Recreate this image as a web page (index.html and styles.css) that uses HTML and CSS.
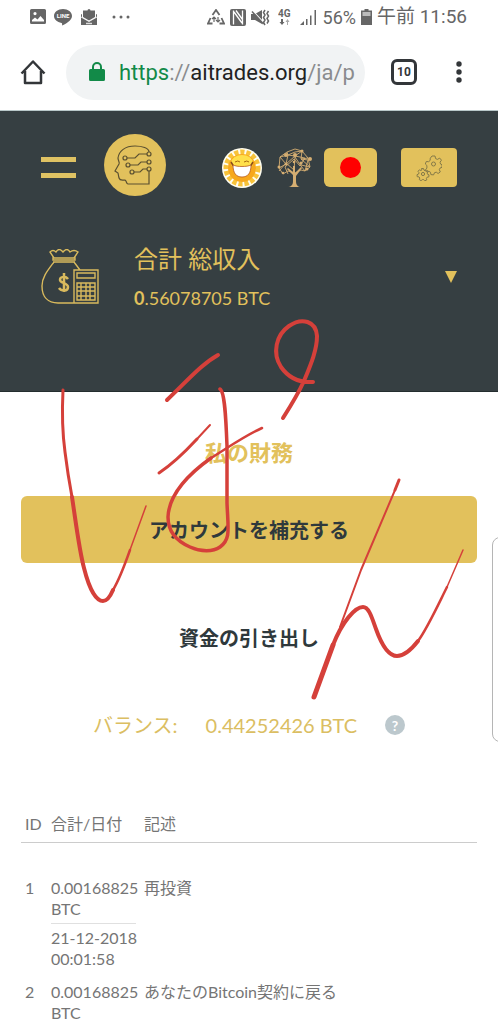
FILE: index.html
```html
<!DOCTYPE html>
<html lang="ja">
<head>
    <meta charset="UTF-8">
    <meta name="viewport" content="width=device-width, initial-scale=1.0">
    <title>私の財務</title>
    <link rel="stylesheet" href="styles.css">
</head>
<body>
    <!-- Phone status bar -->
    <div class="status-bar">
        <div class="status-left">
            <svg width="16" height="16" viewBox="0 0 16 16"><path fill="#666" fill-rule="evenodd" d="M1.500 0h13A1.500 1.500 0 0 1 16 1.500v12a1.500 1.500 0 0 1-1.500 1.500h-13A1.500 1.500 0 0 1 0 13.500v-12A1.500 1.500 0 0 1 1.500 0zM2 12.500h12V11l-3.500-4-3 3.500L5 8.500 2 11zM5 3a1.600 1.600 0 1 0 0 3.200A1.600 1.600 0 0 0 5 3z"/></svg>
            <svg width="18" height="18" viewBox="0 0 18 18"><path fill="#666" d="M9 1C4 1 0 4 0 8c0 3.500 3.200 6.300 7.500 6.900.8.200.7 1.100.5 2.600 3-1.200 10-5 10-9.500C18 4 14 1 9 1z"/><text x="9" y="10" class="line-text">LINE</text></svg>
            <svg width="18" height="18" viewBox="0 0 18 18"><path fill="#666" d="M3 2.500h4.500a1.500 1.500 0 0 1 3 0H15V9l-6 3.500L3 9zM1 6l1 .5v3L9 13.500l7-4v-3l1-.5v11H1z"/><path stroke="#fff" stroke-width=".8" fill="none" d="M1 9l8 4.500L17 9"/><path stroke="#ddd" stroke-width="1.500" d="M6 15.500h6"/></svg>
            <svg class="dots" width="18" height="4" viewBox="0 0 18 4"><g fill="#666"><circle cx="2" cy="2" r="1.500"/><circle cx="9" cy="2" r="1.500"/><circle cx="16" cy="2" r="1.500"/></g></svg>
        </div>
        <div class="status-right">
            <svg width="18" height="17" viewBox="0 0 18 17"><path fill="none" stroke="#666" stroke-width="1.800" d="M5.500 6L9 1l3.500 5M14.500 9l2.500 5.500h-4.500M5.500 14.500H1L3.500 9"/><path fill="none" stroke="#666" stroke-width="1.200" d="M7 8v5M5 10l2-2 2 2M11 8v5M9 11l2 2 2-2"/></svg>
            <svg width="16" height="17" viewBox="0 0 16 17"><rect width="16" height="17" rx="2" fill="#666"/><path fill="none" stroke="#fff" stroke-width="1.300" d="M3.500 1.500v14M4 3l8 11M12.500 1.500v14M6 1.500l6.500 9"/></svg>
            <svg width="19" height="17" viewBox="0 0 19 17"><path fill="#666" d="M0 5h4l7-4v14l-7-4H0z"/><path stroke="#fff" stroke-width="1.300" d="M1 1l13 14"/><path stroke="#666" stroke-width="1.500" d="M1 2.500l11.500 12.500"/><path fill="none" stroke="#666" stroke-width="1.500" d="M14 1l-1.500 2.500L14 6l-1.500 2.500L14 11l-1.500 2.500L14 16M17.500 2L16 4.500 17.500 7 16 9.500l1.500 2.500-1.500 2.500"/></svg>
            <svg class="network" width="14" height="17" viewBox="0 0 14 17"><text x="0" y="8" class="network-text">4G</text><path fill="#666" d="M3 10h2v3h1.500L4 16l-2.500-3H3z"/><path fill="#aaa" d="M9 16h1v-3h1.500L9.500 10 7.500 13H9z"/></svg>
            <svg width="18" height="17" viewBox="0 0 18 17"><path fill="#666" d="M0 16l4-4v4zM6 10h1.500v6H6zM10 6.500h1.500V16H10zM14.500 1H16v15h-1.500z"/></svg>
            <span class="percent">56%</span>
            <svg width="11" height="16" viewBox="0 0 11 16"><path fill="#666" d="M3.500 0h4v1.500H11V16H0V1.500h3.500z"/><path fill="#bbb" d="M1.500 3h8v4h-8z"/></svg>
            <span class="clock">午前 11:56</span>
        </div>
    </div>

    <!-- Browser toolbar -->
    <div class="toolbar">
        <button type="button" class="icon-button" aria-label="ホーム">
            <svg width="26" height="26" viewBox="0 0 26 26"><path fill="none" stroke="#333639" stroke-width="2.500" stroke-linejoin="round" d="M1.500 14.500L13 2.500l11.500 12M5 12v12h16V12"/></svg>
        </button>
        <button type="button" class="address">
            <svg width="16" height="20" viewBox="0 0 16 20"><path fill="#128a48" d="M1.500 7h13A1.500 1.500 0 0 1 16 8.500v9a1.500 1.500 0 0 1-1.500 1.500h-13A1.500 1.500 0 0 1 0 17.500v-9A1.500 1.500 0 0 1 1.500 7z"/><path fill="none" stroke="#128a48" stroke-width="2" d="M4 8V5a4 4 0 0 1 8 0v3"/></svg>
            <span class="url"><span class="secure">https</span><span class="dim">://</span>aitrades.org<span class="dim">/ja/p</span></span>
        </button>
        <button type="button" class="tabs">10</button>
        <button type="button" class="icon-button" aria-label="メニュー">
            <svg width="6" height="24" viewBox="0 0 6 24"><g fill="#333639"><circle cx="3" cy="4" r="2.700"/><circle cx="3" cy="12" r="2.700"/><circle cx="3" cy="20" r="2.700"/></g></svg>
        </button>
    </div>

    <header class="header">
        <nav class="nav">
            <button type="button" class="burger" aria-label="メニュー"><span></span><span></span></button>
            <a href="#" class="logo" aria-label="AI Trades">
                <svg width="62" height="62" viewBox="0 0 62 62"><circle cx="31" cy="31" r="31" fill="#e2c15c"/><g fill="none" stroke="#5b5030" stroke-width="1.200"><path d="M45 18c0-4-7-6-14-6-10 0-16 5-17 12 0 3 2 4 1 6l-4 7 3 2 1 5c1 3 3 2 6 2 2 1 1 4 3 4h21V37"/><circle cx="21" cy="24" r="2"/><path d="M23 24h8l4-4h8"/><circle cx="45" cy="20" r="2"/><circle cx="24" cy="31" r="2"/><path d="M26 31h8l3-3h6"/><circle cx="45" cy="28" r="2"/><circle cx="28" cy="38" r="2"/><path d="M30 38h6l3-3h4"/><circle cx="45" cy="35" r="2"/></g></svg>
            </a>
            <a href="#" class="sun" aria-label="スマイル">
                <svg width="40" height="40" viewBox="0 0 40 40"><circle cx="20" cy="20" r="20" fill="#fffdf0"/><circle cx="20" cy="20" r="16" fill="none" stroke="#f8c33a" stroke-width="5" stroke-dasharray="4.200 1.900"/><circle cx="20" cy="20" r="14" fill="#f7a81c"/><ellipse cx="20" cy="15" rx="11" ry="8" fill="#ffe04a"/><path d="M13 14q3-2 5 0M22 14q3-2 5 0" fill="none" stroke="#a86a10"/><path d="M9 14l3 5M31 14l-3 5" stroke="#8a4a18" stroke-width="1.500"/><path d="M11 17c4 2 14 2 18 0 0 8-3 12-9 12s-9-4-9-12z" fill="#fff" stroke="#b65a20" stroke-width=".8"/></svg>
            </a>
            <a href="#" class="tree" aria-label="ツリー">
                <svg width="36" height="40" viewBox="0 0 36 40"><path fill="#d5ae72" d="M11 39c4 0 6-2 6-6v-6l-6-6 1-1 5 4v-6h2v7l6-6 1 1-6 8v5c0 4 2 6 5 6z"/><g fill="none" stroke="#d5ae72" stroke-width=".9"><path d="M3 20l1-11 7-5 8-3 7 2 6 7 2 9-5 4-4-1-6 3-7-2-5 3zM3 20l7-4 2-9-8 2 6 7 9-8 7-5-7 1-7 3 7 1 10 2-5 8-6-7-9 8 3 7M32 10l-7 1 7 1-3 11-4-5-6-9-1 13-8-7-7 8M11 4l1 3M26 3l-1 8 9 8-9-2"/></g><g fill="#d5ae72"><circle cx="10" cy="7" r="2"/><circle cx="19" cy="7" r="2"/><circle cx="34" cy="11" r="2"/><circle cx="3" cy="19" r="1.500"/><circle cx="10" cy="16" r="1.500"/><circle cx="25" cy="15" r="1.500"/><circle cx="18" cy="14" r="1.300"/><circle cx="26" cy="3" r="1.500"/><circle cx="31" cy="21" r="1.500"/><circle cx="7" cy="25" r="1.300"/></g></svg>
            </a>
            <button type="button" class="flag" aria-label="日本語"><span class="flag-dot"></span></button>
            <button type="button" class="settings" aria-label="設定">
                <svg width="26" height="26" viewBox="0 0 26 26"><g fill="none" stroke="#857a48" stroke-width="1" stroke-linejoin="round"><path d="M16 1h3l.6 2.600 1.800.8 2.300-1.300 1.800 2.100-1.500 2 .6 1.900 1.400.6v2.600l-2 .8-.7 1.600 1 2.200-2.200 1.600-1.800-1.300-1.800.5-.9 2.200-2.700-.3-.4-2.300-1.600-1-2.200.7-1.400-2.300 1.600-1.500V10.500L9.300 9l1-2.500 2.300.2 1.500-1.200.2-2.300z"/><circle cx="17.500" cy="9" r="2"/><path d="M5.500 13.500h2l.5 1.700 1.300.6 1.500-.8 1.400 1.600-1 1.500.4 1.200 1.400.6-.2 2-1.700.3-.7 1.200.4 1.500-1.900.9-1.100-1.200H6.300l-1.200 1.100-1.800-1.100.5-1.600-.8-1.100-1.800-.2-.2-2 1.600-.7.4-1.300-1-1.400 1.400-1.500 1.500.7 1-.6z"/><circle cx="7" cy="19" r="1.600"/></g></svg>
            </button>
        </nav>
        <div class="income">
            <svg class="bag" width="58" height="56" viewBox="0 0 58 56"><g fill="none" stroke="#d9ba5d" stroke-width="1.400"><path d="M13 9L9 3q3-3 6 0 3-5 7 0 4-5 7 0 4-3 8 0l-4 6M12 9h22v2H12zM12 13h22M13 13C7 21 1 28 1 37c0 11 6 17 16 17h40V21H33v33M33 13l6 8M36 24h18v5H36zM36 34h18v17H36zM36 38h18M36 42h18M36 47h18M40 34v17M45 34v17M49 34v17"/><path stroke-width="2.500" d="M27 30c-2-3-8-3-8 1 0 3 8 3 8 7 0 5-7 4-9 1M23 24v19"/></g></svg>
            <div class="income-text">
                <div class="income-title">合計 総収入</div>
                <div class="income-value"><b>0</b>.56078705 BTC</div>
            </div>
            <button type="button" class="toggle" aria-label="開く"><svg width="12" height="12" viewBox="0 0 12 12"><path fill="#e2c15c" d="M0 0h12L6 12z"/></svg></button>
        </div>
    </header>

    <main class="finance">
        <h2>私の財務</h2>
        <button type="button" class="btn btn-gold">アカウントを補充する</button>
        <button type="button" class="btn">資金の引き出し</button>
        <div class="balance">
            <span>バランス:</span>
            <span class="balance-value">0.44252426 BTC</span>
            <button type="button" class="help">?</button>
        </div>
        <table class="history">
            <thead>
                <tr><th class="col-id">ID</th><th class="col-sum">合計/日付</th><th>記述</th></tr>
            </thead>
            <tbody>
                <tr>
                    <td>1</td>
                    <td><div class="amount">0.00168825 BTC</div><div class="date">21-12-2018<br>00:01:58</div></td>
                    <td>再投資</td>
                </tr>
                <tr>
                    <td>2</td>
                    <td>0.00168825 BTC</td>
                    <td>あなたのBitcoin契約に戻る</td>
                </tr>
            </tbody>
        </table>
    </main>

    <!-- Edge panel handle -->
    <div class="edge-panel"></div>

    <!-- Handwriting over the page -->
    <svg class="drawing" viewBox="0 0 498 1024">
        <g fill="none" stroke="#d5403a" stroke-linecap="round" stroke-linejoin="round">
            <path stroke-width="3" d="M63 390C62 410 62 430 65 452C67 468 69 481 72 497"/>
            <path stroke-width="4" d="M72 497C76 523 79 549 84 568C90 592 97 601 103 601C107 601 110 597 113 590"/>
            <path stroke-width="2.500" d="M113 590C119 580 124 567 130 550"/>
            <path stroke-width="1.500" d="M130 550L146 506"/>
            <path stroke-width="4" d="M218 355C202 364 190 378 167 400"/>
            <path stroke-width="3" d="M197 439C184 453 174 463 159 473"/>
            <path stroke-width="2" d="M210 425L197 439"/>
            <path stroke-width="3.500" d="M220 389C225 392 226 420 227 446V503C228 529 231 539 220 547C213 552 201 552 190 547C174 540 168 529 168 517C169 493 190 473 211 458"/>
            <path stroke-width="2.500" d="M211 458C226 449 244 436 262 428"/>
            <path stroke-width="4" d="M313 382C299 383 288 377 281 367C272 353 276 335 289 326C302 317 316 321 317 336C317 350 311 364 304 381C298 394 290 407 283 418"/>
            <path stroke-width="3" d="M399 480L395 490"/>
            <path stroke-width="2" d="M395 490C384 516 373 542 361 570L340 627"/>
            <path stroke-width="5" d="M333 645L314 697"/>
            <path stroke-width="4" d="M333 645C342 622 355 607 363 607C369 607 372 618 376 629C382 646 389 656 397 656C404 656 411 650 418 641"/>
            <path stroke-width="2.500" d="M418 641C427 629 438 605 447 587"/>
            <path stroke-width="1.500" d="M447 587L463 550"/>
        </g>
    </svg>
</body>
</html>
```
FILE: styles.css
```css
* {
    box-sizing: border-box;
}

body {
    position: relative;
    margin: 0;
    overflow-x: hidden;
    background-color: #fff;
    color: #757575;
    font-family: Lato, "Noto Sans CJK JP", sans-serif;
    font-size: 16px;
}

svg {
    display: block;
    flex: none;
}

button {
    padding: 0;
    border: none;
    background: none;
    color: inherit;
    font-family: inherit;
    cursor: pointer;
}

/* Status bar */
.status-bar {
    display: flex;
    align-items: center;
    justify-content: space-between;
    height: 34px;
    padding: 0 31px 0 30px;
    color: #666;
    font-family: Roboto, "Noto Sans CJK JP", sans-serif;
}

.status-left,
.status-right {
    display: flex;
    align-items: center;
    gap: 8px;
}

.status-right {
    gap: 5px;
}

.dots {
    margin-left: 6px;
}

.network {
    margin: 0 3px;
}

.line-text {
    fill: #fff;
    font-size: 6px;
    font-weight: bold;
    text-anchor: middle;
}

.network-text {
    fill: #666;
    font-size: 10px;
    font-weight: bold;
}

.percent {
    font-size: 18px;
}

.clock {
    font-size: 19px;
    line-height: 24px;
    white-space: nowrap;
}

/* Browser toolbar */
.toolbar {
    display: flex;
    align-items: center;
    height: 77px;
    padding: 0 36px 0 20px;
    border-bottom: 1px solid #b9c8c9;
    font-family: Roboto, sans-serif;
}

.address {
    display: flex;
    align-items: center;
    flex: 1;
    min-width: 0;
    gap: 14px;
    height: 55px;
    margin: 0 26px 0 20px;
    padding: 0 10px 0 23px;
    border-radius: 28px;
    background-color: #f1f3f4;
    color: #222;
    font-size: 22px;
}

.url {
    flex: 1;
    overflow: hidden;
    text-align: left;
    white-space: nowrap;
}

.secure {
    color: #128a48;
}

.dim {
    color: #8a8c8e;
}

.tabs {
    width: 26px;
    height: 26px;
    margin-right: 39px;
    border: 3px solid #333639;
    border-radius: 6px;
    color: #333639;
    font-size: 12px;
    font-weight: bold;
}

/* Dark header */
.header {
    height: 281px;
    padding: 23px 41px 0;
    border-bottom: 1px solid #242d2f;
    background-color: #363f42;
    color: #e2c15c;
}

.nav {
    display: flex;
    align-items: center;
}

.burger {
    display: grid;
    gap: 11px;
    width: 35px;
}

.burger span {
    height: 5px;
    background-color: #dfc263;
}

.logo {
    margin: 0 auto 5px 28px;
}

.tree {
    margin: 0 12px 0 14px;
}

.flag,
.settings {
    display: flex;
    align-items: center;
    justify-content: center;
    width: 53px;
    height: 39px;
    border-radius: 6px;
    background-color: #e2c15c;
}

.settings {
    width: 56px;
    margin-left: 24px;
    border-radius: 4px;
}

.flag-dot {
    width: 21px;
    height: 21px;
    border-radius: 50%;
    background-color: #f00;
}

.income {
    display: flex;
    align-items: center;
    margin-top: 41px;
}

.income-text {
    flex: 1;
    margin-left: 35px;
}

.income-title {
    font-size: 24px;
    line-height: 34px;
}

.income-value {
    margin-top: 8px;
    font-size: 18px;
    line-height: 28px;
}

/* Finance block */
.finance {
    padding: 46px 21px 0;
}

h2 {
    margin: 0 0 28px;
    color: #e2c15c;
    font-size: 22px;
    line-height: 30px;
    text-align: center;
}

.btn {
    display: block;
    width: 100%;
    height: 67px;
    border-radius: 6px;
    color: #2f393c;
    font-size: 20px;
    font-weight: bold;
}

.btn-gold {
    margin-bottom: 41px;
    background-color: #e2c15c;
}

.balance {
    display: flex;
    align-items: center;
    justify-content: center;
    gap: 28px;
    margin-top: 39px;
    color: #dbbe62;
    font-size: 20px;
    line-height: 30px;
}

.help {
    width: 20px;
    height: 20px;
    border-radius: 50%;
    background-color: #bcc8cd;
    color: #fff;
    font-size: 14px;
    font-weight: bold;
}

.history {
    width: 100%;
    margin-top: 66px;
    border-collapse: collapse;
    table-layout: fixed;
    line-height: 21px;
}

.history th {
    padding: 7px 4px 8px;
    border-bottom: 1px solid #ccc;
    font-weight: normal;
    text-align: left;
}

.history td {
    padding: 12px 4px 0;
    vertical-align: top;
}

.history tbody tr:first-child td {
    padding-top: 34px;
}

.history .col-id {
    width: 26px;
    white-space: nowrap;
}

.history .col-sum {
    width: 93px;
}

.amount {
    margin-bottom: 3px;
    padding-bottom: 4px;
    border-bottom: 1px solid #e0e0e0;
}

.date {
    white-space: nowrap;
}

/* Overlays */
.edge-panel {
    position: absolute;
    top: 537px;
    right: -14px;
    width: 20px;
    height: 205px;
    border: 1px solid #b5b5b5;
    border-radius: 8px;
    background-color: #fff;
}

.drawing {
    position: absolute;
    top: 0;
    left: 0;
    width: 100%;
    pointer-events: none;
}
```
